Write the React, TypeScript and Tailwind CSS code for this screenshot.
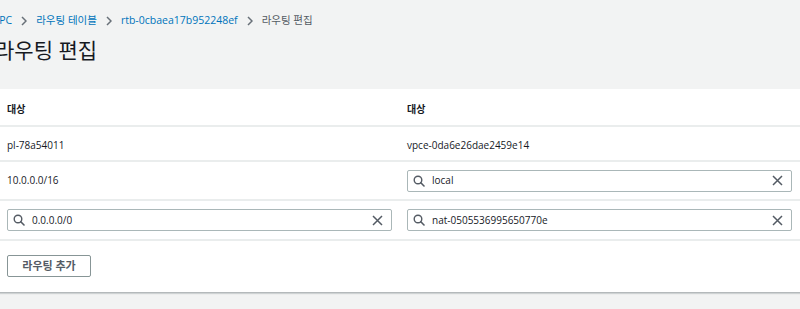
import React from 'react';

const font = { fontFamily: '"Open Sans", "Noto Sans CJK KR", sans-serif' };

function Chevron() {
  return (
    <svg width="6" height="10" viewBox="0 0 6 10" className="mx-[9px] shrink-0">
      <path d="M1 1 L5 5 L1 9" fill="none" stroke="#687078" strokeWidth="1.5" />
    </svg>
  );
}

function SearchIcon() {
  return (
    <svg width="12" height="12" viewBox="0 0 12 12" className="shrink-0">
      <circle cx="5" cy="5" r="3.8" fill="none" stroke="#545b64" strokeWidth="1.4" />
      <path d="M7.8 7.8 L11 11" stroke="#545b64" strokeWidth="1.6" strokeLinecap="round" />
    </svg>
  );
}

function ClearIcon() {
  return (
    <svg width="11" height="11" viewBox="0 0 11 11" className="shrink-0">
      <path d="M1 1 L10 10 M10 1 L1 10" stroke="#545b64" strokeWidth="1.5" />
    </svg>
  );
}

function SearchInput({ value }: { value: string }) {
  return (
    <div className="flex h-[22px] w-full items-center rounded-[2px] border border-[#aab7b8] bg-white pl-[5px] pr-[8px]">
      <SearchIcon />
      <span className="ml-[7px] flex-1 text-[10px] text-[#16191f]">{value}</span>
      <ClearIcon />
    </div>
  );
}

function Cell({ children }: { children: React.ReactNode }) {
  return <div className="flex items-center pl-[7px] pr-[8px]">{children}</div>;
}

function TextCell({ children }: { children: React.ReactNode }) {
  return <div className="flex items-center pl-[7px] pr-[8px] pt-[4px]">{children}</div>;
}

export default function App() {
  return (
    <div className="h-[309px] w-[800px] overflow-hidden bg-[#f2f3f3]" style={font}>
      {/* Breadcrumbs and title */}
      <div className="ml-[-7px] pt-[14px]">
        <div className="flex h-[14px] items-center text-[10.5px]">
          <span className="text-[#0073bb]">VPC</span>
          <Chevron />
          <span className="text-[#0073bb]">라우팅 테이블</span>
          <Chevron />
          <span className="text-[#0073bb]">rtb-0cbaea17b952248ef</span>
          <Chevron />
          <span className="text-[#545b64]">라우팅 편집</span>
        </div>
        <h1 className="ml-[2px] mt-[8px] text-[21px] leading-[28px] text-[#16191f]">라우팅 편집</h1>
      </div>

      {/* Routes panel */}
      <div className="mt-[25px] border-b border-[#b4b9bb] bg-white shadow-[0_1px_1px_rgba(0,28,36,0.15)]">
        <div className="grid h-[38px] grid-cols-2 border-b-2 border-[#eaeded] text-[10px] font-bold text-[#16191f]">
          <TextCell>대상</TextCell>
          <TextCell>대상</TextCell>
        </div>
        <div className="grid h-[35px] grid-cols-2 border-b-2 border-[#eaeded] text-[10px] text-[#16191f]">
          <TextCell>pl-78a54011</TextCell>
          <TextCell>vpce-0da6e26dae2459e14</TextCell>
        </div>
        <div className="grid h-[39px] grid-cols-2 border-b-2 border-[#eaeded] text-[10px] text-[#16191f]">
          <div className="flex items-start pl-[7px] pt-[11px]">10.0.0.0/16</div>
          <Cell>
            <SearchInput value="local" />
          </Cell>
        </div>
        <div className="grid h-[40px] grid-cols-2 border-b-2 border-[#eaeded]">
          <Cell>
            <SearchInput value="0.0.0.0/0" />
          </Cell>
          <Cell>
            <SearchInput value="nat-0505536995650770e" />
          </Cell>
        </div>
        <div className="px-[7px] pb-[15px] pt-[14px]">
          <button className="flex h-[22px] w-[84px] items-center justify-center rounded-[2px] border border-[#879596] bg-white text-[11px] font-semibold text-[#545b64]">
            라우팅 추가
          </button>
        </div>
      </div>
    </div>
  );
}
